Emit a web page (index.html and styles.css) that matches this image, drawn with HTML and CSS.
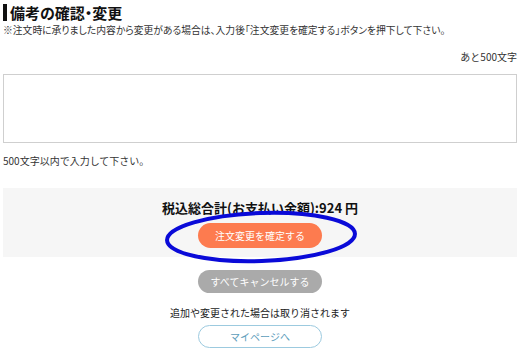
FILE: index.html
```html
<!DOCTYPE html>
<html lang="ja">
<head>
<meta charset="utf-8">
<link rel="stylesheet" href="styles.css">
</head>
<body>
<div class="page">
  <h2 class="title">備考の確認・変更</h2>
  <p class="note">※注文時に承りました内容から変更がある場合は、入力後「注文変更を確定する」ボタンを押下して下さい。</p>
  <p class="remain">あと500文字</p>
  <textarea class="memo"></textarea>
  <p class="limit">500文字以内で入力して下さい。</p>
  <div class="panel">
    <p class="total">税込総合計(お支払い金額):924 円</p>
    <button class="btn btn-confirm">注文変更を確定する</button>
  </div>
  <div class="actions">
    <button class="btn btn-cancel">すべてキャンセルする</button>
    <p class="warn">追加や変更された場合は取り消されます</p>
    <button class="btn btn-mypage">マイページへ</button>
  </div>
  <svg class="annotation" width="526" height="362" viewBox="0 0 526 362">
    <ellipse cx="261" cy="237" rx="94" ry="24" fill="none" stroke="#0a0ad8" stroke-width="4" transform="rotate(-2 261 237)"/>
  </svg>
</div>
</body>
</html>
```
FILE: styles.css
```css
* { box-sizing: border-box; }
html, body { margin: 0; padding: 0; background: #fff; }
body {
  font-family: "Noto Sans CJK JP", "Noto Sans", sans-serif;
  color: #222;
}
.page {
  position: relative;
  width: 526px;
  height: 362px;
  padding: 0 9px 0 3px;
  overflow: hidden;
}
p { margin: 0; }
.title {
  margin: 4px 0 0;
  height: 17px;
  border-left: 4px solid #111;
  padding-left: 3px;
  font-size: 15px;
  font-weight: bold;
  line-height: 17px;
  color: #111;
  font-feature-settings: "palt";
}
.note {
  margin-top: 2px;
  font-size: 9.8px;
  line-height: 14px;
  color: #333;
  white-space: nowrap;
  font-feature-settings: "palt";
}
.remain {
  margin-top: 13px;
  font-size: 10px;
  line-height: 14px;
  text-align: right;
  padding-right: 0;
  color: #333;
}
.memo {
  display: block;
  margin-top: 10px;
  width: 514px;
  height: 69px;
  border: 1px solid #cfcfcf;
  resize: none;
  font: inherit;
}
.limit {
  margin-top: 11px;
  font-size: 10px;
  line-height: 14px;
  color: #333;
}
.panel {
  margin-top: 20px;
  width: 514px;
  height: 69px;
  background: #f6f6f6;
  padding-top: 13px;
  display: flex;
  flex-direction: column;
  align-items: center;
}
.total {
  font-size: 13px;
  font-weight: bold;
  line-height: 14px;
  color: #111;
}
.btn {
  display: block;
  width: 124px;
  border-radius: 13px;
  font-family: inherit;
  font-size: 10px;
  color: #fff;
  padding: 0;
  cursor: pointer;
}
.btn-confirm {
  margin-top: 8px;
  height: 25px;
  border: none;
  background: #fd7b4f;
}
.actions {
  width: 514px;
  display: flex;
  flex-direction: column;
  align-items: center;
}
.btn-cancel {
  margin-top: 13px;
  height: 23px;
  border: none;
  background: #aaaaaa;
  border-radius: 12px;
}
.warn {
  margin-top: 13px;
  font-size: 10px;
  line-height: 14px;
  color: #222;
}
.btn-mypage {
  margin-top: 5px;
  height: 23px;
  border: 1px solid #9ccadf;
  background: #fff;
  color: #5d9dbb;
  border-radius: 12px;
}
.annotation {
  position: absolute;
  left: 0;
  top: 0;
  pointer-events: none;
}
```
